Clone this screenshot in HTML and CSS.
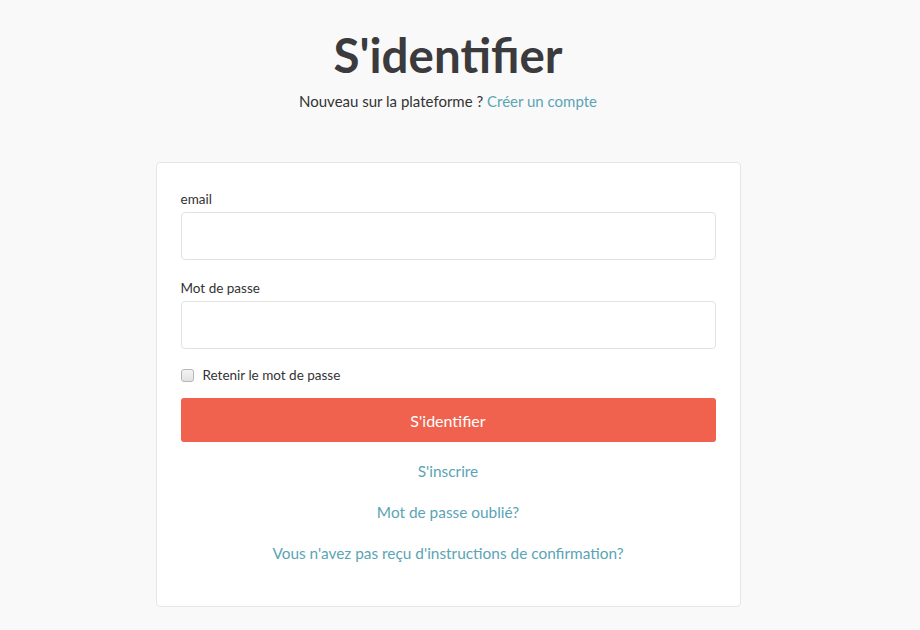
FILE: index.html
```html
<!DOCTYPE html>
<html lang="fr">
<head>
<meta charset="utf-8">
<title>S'identifier</title>
<link rel="stylesheet" href="styles.css">
</head>
<body>
<main class="page">
  <header class="head">
    <h1 class="title">S'identifier</h1>
    <p class="subtitle">Nouveau sur la plateforme ? <a class="link" href="#">Créer un compte</a></p>
  </header>
  <form class="card">
    <div class="field">
      <label class="label" for="email">email</label>
      <input class="input" id="email" type="email">
    </div>
    <div class="field">
      <label class="label" for="pw">Mot de passe</label>
      <input class="input" id="pw" type="password">
    </div>
    <label class="remember"><input class="check" type="checkbox"><span>Retenir le mot de passe</span></label>
    <button class="btn" type="button">S'identifier</button>
    <nav class="links">
      <a class="link" href="#">S'inscrire</a>
      <a class="link" href="#">Mot de passe oublié?</a>
      <a class="link" href="#">Vous n'avez pas reçu d'instructions de confirmation?</a>
    </nav>
  </form>
</main>
</body>
</html>
```

FILE: styles.css
```css
* { box-sizing: border-box; }
html, body { margin: 0; padding: 0; }
body {
  background: #f9f9f9;
  font-family: "Lato", "Open Sans", sans-serif;
  color: #333;
}
.page {
  width: 896px;
  display: flex;
  flex-direction: column;
  align-items: center;
}
.head { text-align: center; padding-top: 27px; }
.title {
  margin: 0;
  font-size: 47.5px;
  font-weight: 700;
  line-height: 56px;
  color: #3b3a3c;
}
.subtitle {
  margin: 8px 0 0;
  font-size: 15px;
  line-height: 20px;
  color: #333;
}
.link { color: #5ba4b5; text-decoration: none; }
.card {
  margin-top: 51px;
  width: 585px;
  background: #fff;
  border: 1px solid #e6e6e6;
  border-radius: 4px;
  padding: 26px 24px 42px;
  display: flex;
  flex-direction: column;
}
.field { display: flex; flex-direction: column; margin-bottom: 18px; }
.label { font-size: 13.5px; line-height: 20px; margin-bottom: 3px; color: #333; }
.input {
  height: 48px;
  border: 1px solid #e2e2e2;
  border-radius: 4px;
  background: #fff;
  font: inherit;
}
.remember {
  display: flex;
  align-items: center;
  font-size: 13.5px;
  line-height: 20px;
  margin-top: -2px;
  color: #333;
}
.check {
  appearance: none;
  width: 13px; height: 13px;
  margin: 0 9px 0 0;
  border: 1px solid #b5b5b5;
  border-radius: 3px;
  background: linear-gradient(#f4f4f4, #e2e2e2);
}
.btn {
  margin-top: 13px;
  height: 44px;
  border: 0;
  border-radius: 3px;
  background: #f0624d;
  color: #fff;
  font: inherit;
  font-size: 16px;
}
.links {
  margin-top: 18px;
  display: flex;
  flex-direction: column;
  align-items: center;
  gap: 19px;
  font-size: 15.4px;
  line-height: 22px;
}
```
